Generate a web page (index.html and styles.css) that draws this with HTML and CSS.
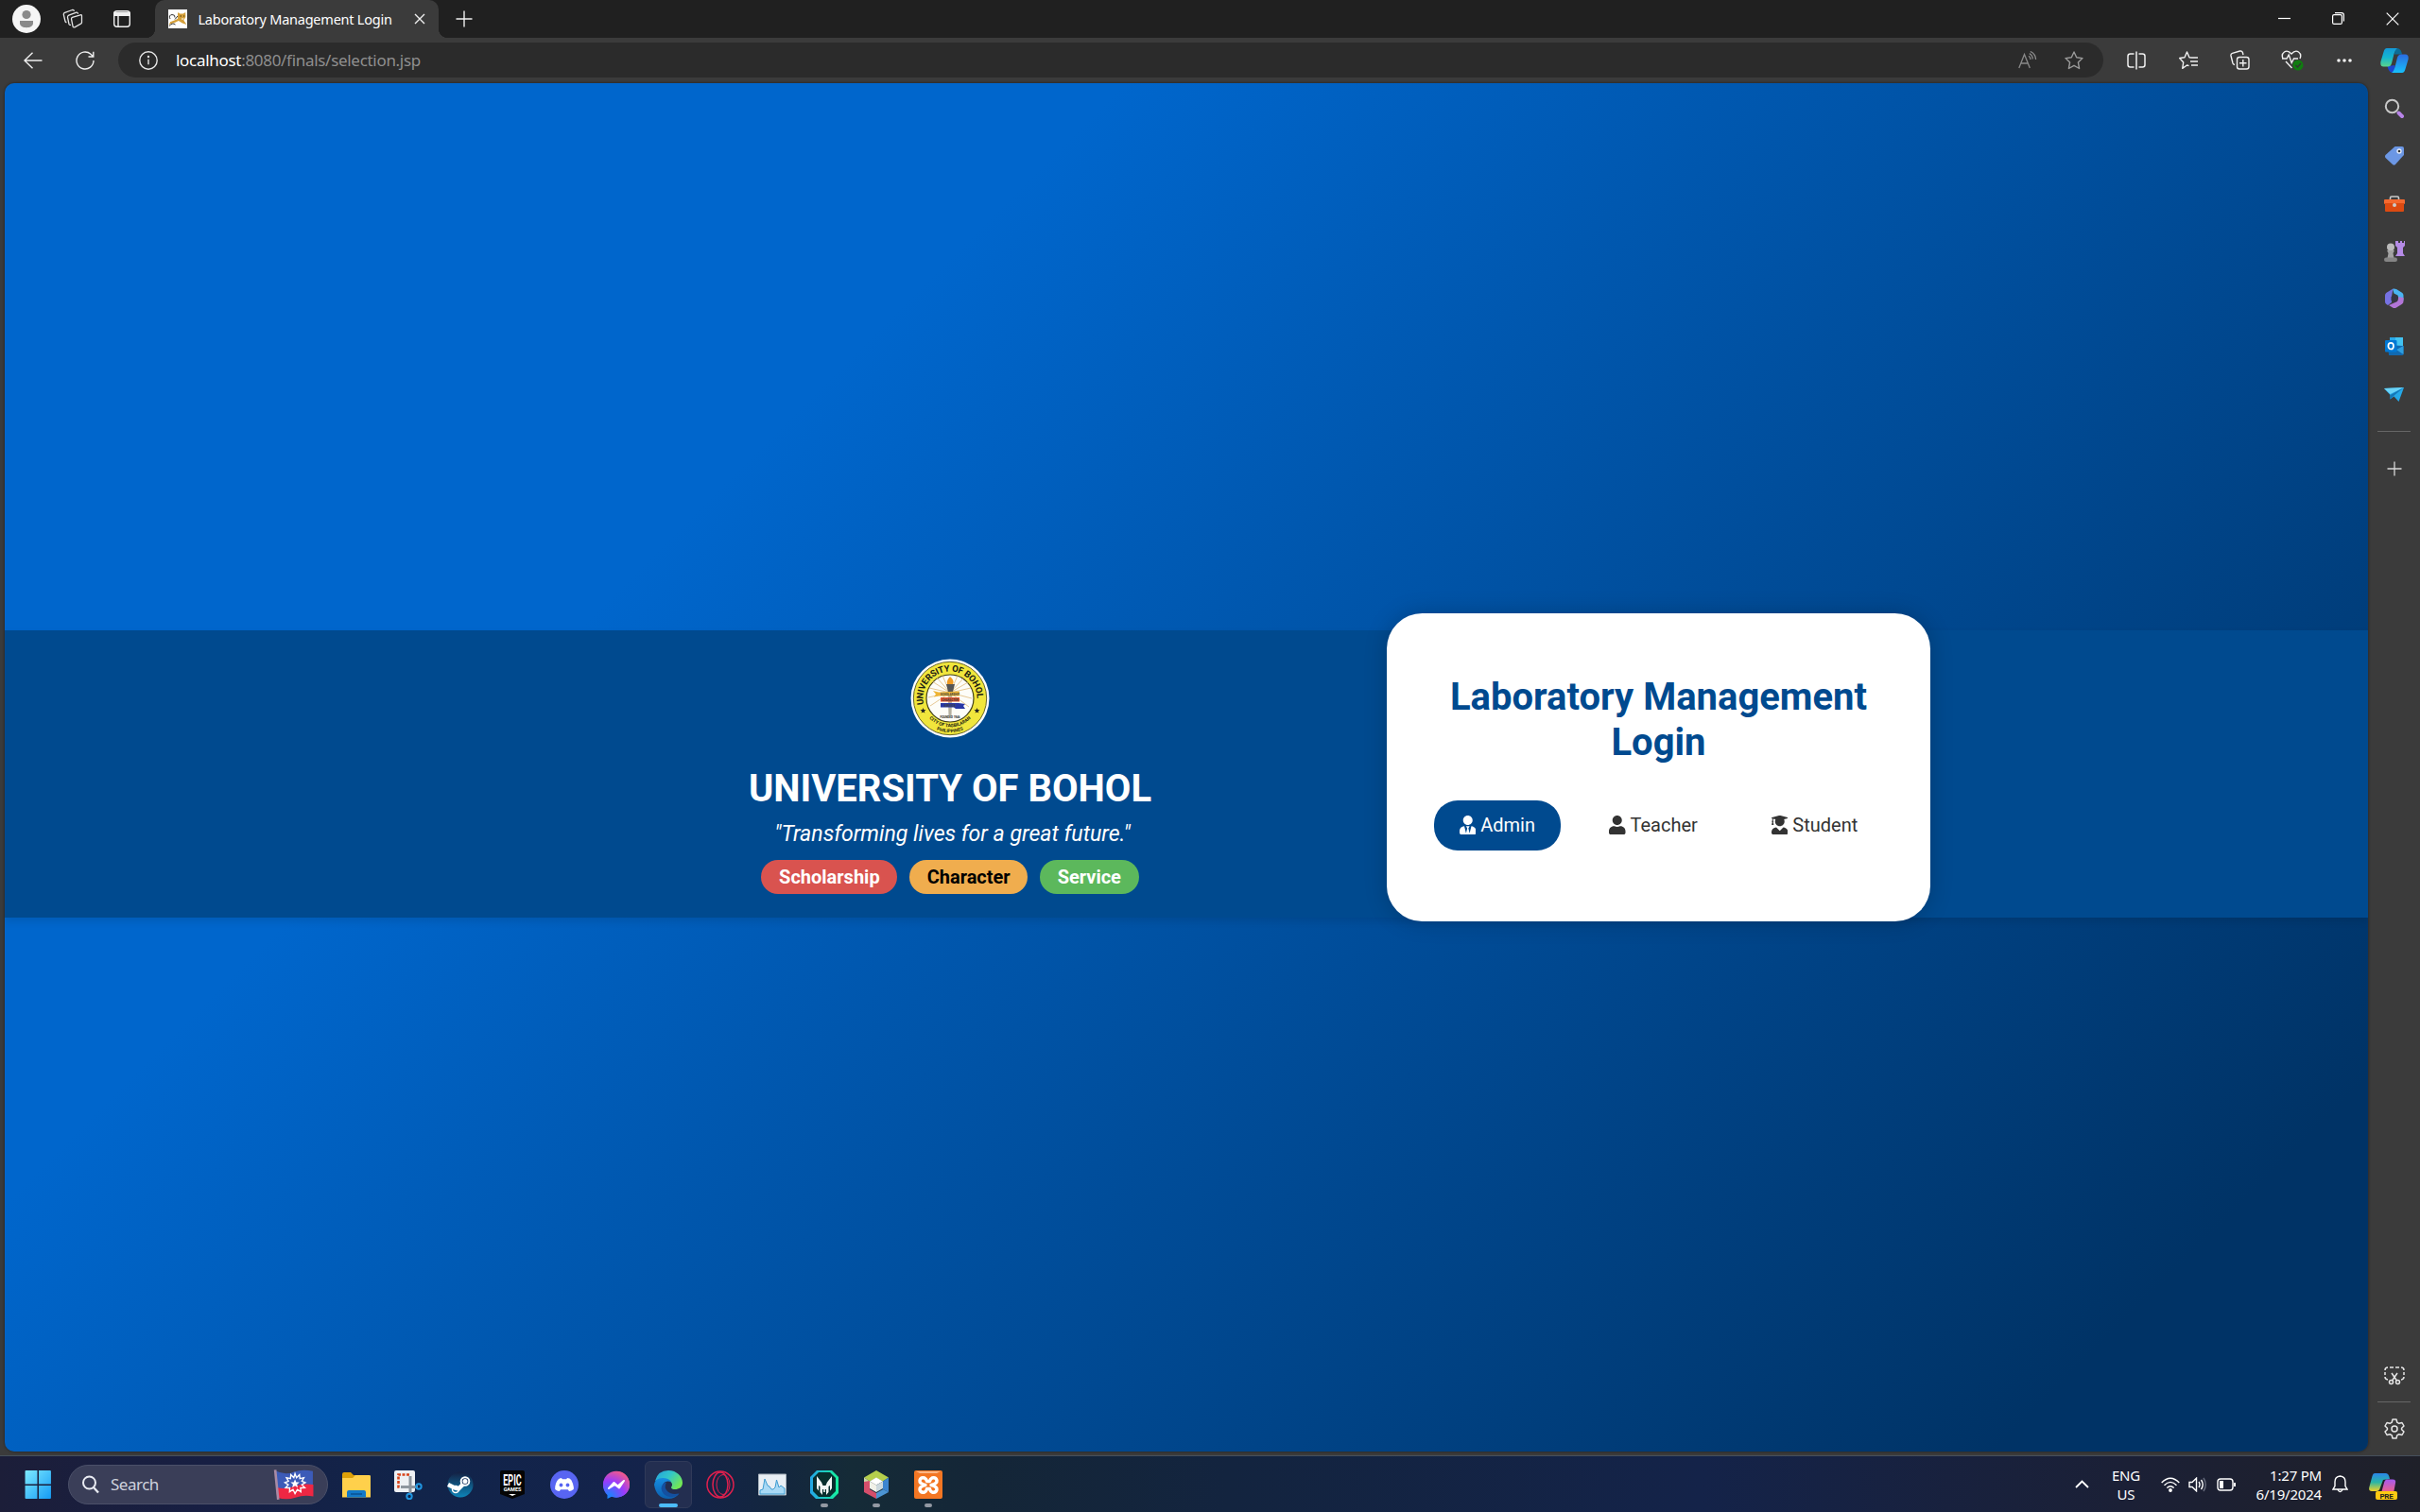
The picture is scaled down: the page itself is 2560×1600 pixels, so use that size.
FILE: index.html
```html
<!DOCTYPE html>
<html lang="en">
<head>
<meta charset="utf-8">
<title>Laboratory Management Login</title>
<link rel="stylesheet" href="styles.css">
</head>
<body>
<header class="titlebar">
  <div class="tb-left">
    <svg class="avatar" width="30" height="30" viewBox="0 0 30 30"><circle cx="15" cy="15" r="15" fill="#f5f5f5"/><circle cx="15" cy="10.500" r="4.600" fill="#8a8a8a"/><path d="M8 17h14v2.500c0 3-3 4.700-7 4.700s-7-1.700-7-4.700z" fill="#8a8a8a"/></svg>
    <svg class="workspaces" width="22" height="22" viewBox="0 0 22 22" fill="none" stroke="#e4e4e4" stroke-width="1.300"><path d="M10.500 9.300l8.500-2.500q1.500-.4 1.500 1v7q0 1-1 1.400l-6.500 3.600q-1.700.5-2-1.200l-1.500-7.500q-.2-1.300 1-1.800zM7 16.500l-1.500-7q-.2-1.700 1.300-2.300l8-3q1.500-.3 1.700 1.500M7 16.500q.5 1.300 2 .8M3 13.500L1.300 6.500q-.2-1.600 1.300-2.200L10.500 1.500q1.500-.4 2 1.200M3 13.500q.3 1.200 1.500 1"/></svg>
    <svg class="tabmenu" width="20" height="20" viewBox="0 0 20 20" fill="none" stroke="#f0f0f0" stroke-width="1.400"><rect x="1.700" y="1.700" width="16.600" height="16.600" rx="3"/><path d="M2 3.500h16v2.700H2z" fill="#f0f0f0"/><path d="M6 6v12"/></svg>
  </div>
  <div class="tab">
    <svg width="20" height="20" viewBox="0 0 20 20"><path fill="#fff" d="M0 0h20v20H0z"/><path d="M10 4.500L10.500 3l1.800 1.500h3.400L18.200 3l.2 5-2 3.500 3 4.500-4.500-1.500-4-2.500-3.500 1.800-5 1.500-1.800 1.500 1.500-3.500 5-2 3-1.500z" fill="#d5a03a"/><path d="M2 10q-2-4 2-4.500 3.500 0 3 3M1 17.500q3.500-4 6.500-1.500M10 7l-3 3.500" stroke="#333" stroke-width="1" fill="none"/><path d="M12.500 7H14M16 7h1.200" stroke="#4a3a10"/><path d="M14 10h2.500" stroke="#fff"/></svg>
    <span class="tab-title">Laboratory Management Login</span>
    <svg width="12" height="12" viewBox="0 0 12 12" stroke="#f0f0f0" stroke-width="1.400"><path d="M1 1l10 10M11 1L1 11"/></svg>
  </div>
  <svg class="newtab" width="18" height="18" viewBox="0 0 18 18" stroke="#f0f0f0" stroke-width="1.400"><path d="M9 .5v17M.5 9h17"/></svg>
  <div class="winctl">
    <span><svg width="13" height="13" viewBox="0 0 13 13"><path d="M0 6.500h13" stroke="#fff" stroke-width="1.200"/></svg></span>
    <span><svg width="13" height="13" viewBox="0 0 13 13" fill="none" stroke="#fff" stroke-width="1.200"><rect x=".6" y="2.600" width="9.800" height="9.800" rx="1.500"/><path d="M3 .6h7q2.400 0 2.400 2.400v6.500"/></svg></span>
    <span><svg width="14" height="14" viewBox="0 0 14 14" stroke="#fff" stroke-width="1.200"><path d="M.7.7l12.600 12.600M13.300.7L.7 13.300"/></svg></span>
  </div>
</header>

<nav class="toolbar">
  <div class="nav-btns">
    <svg width="20" height="18" viewBox="0 0 20 18" fill="none" stroke="#f0f0f0" stroke-width="1.400"><path d="M19.500 9H1M9.500.8L1 9l8.500 8.200"/></svg>
    <svg width="20" height="20" viewBox="0 0 20 20" fill="none" stroke="#f0f0f0" stroke-width="1.400"><path d="M19 10a9 9 0 1 1-3-6.700L18.500 5.800M18.800.8v5.200h-5.300"/></svg>
  </div>
  <div class="address">
    <svg width="20" height="20" viewBox="0 0 20 20" fill="none" stroke="#e6e6e6" stroke-width="1.400"><circle cx="10" cy="10" r="9.200"/><path d="M10 8.800v5.500"/><circle cx="10" cy="6" r=".5"/></svg>
    <span class="url"><b>localhost</b>:8080/finals/selection.jsp</span>
    <div class="addr-end">
      <svg width="20" height="20" viewBox="0 0 20 20" fill="none" stroke="#8a8a8a" stroke-width="1.300"><path d="M.8 18L6.500 3.500 12.300 18M2.800 13h7.500M11 5.200q2 1.200 2 3.800M11.800 2.600q3.500 1.800 3.500 6M12.800.5q5.500 2.500 5.800 8.500"/></svg>
      <svg width="20" height="20" viewBox="0 0 20 20" fill="none" stroke="#9a9a9a" stroke-width="1.400" stroke-linejoin="round"><path d="M10 1l2.700 5.800 6.300.8-4.600 4.400 1.200 6.500L10 15.300l-5.600 3.200 1.200-6.500L1 7.600l6.300-.8z"/></svg>
    </div>
  </div>
  <div class="tools">
    <span><svg width="20" height="20" viewBox="0 0 20 20" fill="none" stroke="#f0f0f0" stroke-width="1.500"><path d="M7.500 3H3.500Q1 3 1 5.500v9Q1 17 3.500 17h4M12.500 3h4Q19 3 19 5.500v9q0 2.500-2.500 2.500h-4M10 .5v19"/></svg></span>
    <span><svg width="20" height="20" viewBox="0 0 20 20" fill="none" stroke="#f0f0f0" stroke-width="1.400" stroke-linejoin="round"><path d="M13 7l-2-.3L8.500 1 6 6.700l-5.300.8 4 4.500-1 6.300L8.500 15l2 .7M13 7h7M12 11h8M13 15h7"/></svg></span>
    <span><svg width="21" height="21" viewBox="0 0 21 21" fill="none" stroke="#f0f0f0" stroke-width="1.400"><rect x="7.500" y="7.500" width="12.500" height="12.500" rx="2.500"/><path d="M13.800 10v7.500M10 13.800h7.500M5 15.500q-1.500-.3-2-1.500L1 6q-.4-2 1.500-2.600L10.500 1q2-.4 2.800 1.300l.7 2.700"/></svg></span>
    <span><svg width="24" height="24" viewBox="0 0 24 24" fill="none" stroke="#f0f0f0" stroke-width="1.400"><path d="M2 10Q0 5.500 3.500 3T11 5q4-4.500 7.500-2T20 10M5 13l6.500 7M1 10h5l2.200-4 3 8.500 2.300-4.500h4.500"/><circle cx="18" cy="17" r="5.500" fill="#107c10" stroke="none"/><path d="M15.500 17l2 2 3.500-4" stroke="#333"/></svg></span>
    <span><svg width="18" height="6" viewBox="0 0 18 6" fill="#f0f0f0"><circle cx="3" cy="3" r="1.800"/><circle cx="9" cy="3" r="1.800"/><circle cx="15" cy="3" r="1.800"/></svg></span>
  </div>
  <svg class="copilot" width="30" height="28" viewBox="0 0 30 28"><defs><linearGradient id="ca" x1="0" y1="0" x2="0" y2="1"><stop offset="0" stop-color="#1499d8"/><stop offset=".5" stop-color="#14b5cf"/><stop offset="1" stop-color="#5ad48a"/></linearGradient><linearGradient id="cb" x1="0" y1="0" x2="0" y2="1"><stop offset="0" stop-color="#2a6be0"/><stop offset="1" stop-color="#17c0fb"/></linearGradient></defs><path d="M16 1c4.500 0 6 1.500 7 6.500h-8z" fill="#0b6c97"/><path d="M13 27q-4 0-5.500-7l8-1v8z" fill="#1c46d0"/><path d="M7 1h11q-2 1-3.500 6L12 17q-1 3.500-4 3.500H3.500Q-.5 20.500.500 15l3-10Q4.500 1 7 1z" fill="url(#ca)"/><path d="M23 27H12q2-1 3.500-6L18 11q1-3.500 4-3.500h4.500q4 0 3 5.500l-3 10q-1 4-3.500 4z" fill="url(#cb)"/></svg>
</nav>

<div class="workspace">
  <main class="page">
    <section class="band">
      <div class="brand">
        <svg class="seal" width="84" height="84" viewBox="0 0 84 84">
          <defs><path id="sealTop" d="M14.500 49.500A28.500 28.500 0 1 1 69.500 49.500"/><path id="sealLow" d="M14 54A30.500 30.500 0 0 0 70 54"/><path id="sealLow2" d="M8 54A36 36 0 0 0 76 54"/></defs>
          <circle cx="42" cy="42" r="41.500" fill="#fff"/><circle cx="42" cy="42" r="38.700" fill="#f1e63c" stroke="#55531d" stroke-width=".9"/><circle cx="42" cy="42" r="25" fill="#fdfdf8" stroke="#44421a" stroke-width="1.200"/>
          <g stroke="#dfba78" stroke-width=".8"><path d="M42 36L20 31M42 36L23 24M42 36L28 20M42 36L34 18M42 36L50 18M42 36L57 20M42 36L61 25M42 36L64 31M42 36L19 41M42 36L65 42M42 36L21 50M42 36L62 51"/></g>
          <path d="M39.500 30h5l-1 30h-3z" fill="#b5b0a0"/><path d="M38 27h9l-2 8h-5z" fill="#555"/><path d="M42 19q5 4 3 8h-6q-1-4 3-8z" fill="#ee9b24"/>
          <path d="M24 34l6 1.500 22-1v5H30l-5 1 2-3z" fill="#edb436"/><path d="M32 41h20v4.500H32z" fill="#e5532d"/><path d="M32 47h19l7 1-2 2 2 3H48l-2-1.500H32z" fill="#2736a5"/>
          <g class="ribbon-text"><text x="42" y="38.500">SCHOLARSHIP</text><text x="42" y="44.500">CHARACTER</text><text x="42" y="50.500">SERVICE</text><text x="42" y="63" fill="#222">FOUNDED 1946</text></g>
          <text class="seal-main"><textPath href="#sealTop" textLength="96" startOffset="1">UNIVERSITY OF BOHOL</textPath></text>
          <text class="seal-sub"><textPath href="#sealLow" startOffset="50%" text-anchor="middle">CITY OF TAGBILARAN</textPath></text>
          <text class="seal-sub"><textPath href="#sealLow2" startOffset="50%" text-anchor="middle">PHILIPPINES</textPath></text>
          <g fill="#222"><path d="M13.500 52l.8 2 2.200.1-1.700 1.400.6 2.100-1.900-1.200-1.900 1.200.6-2.100-1.700-1.400 2.200-.1zM70.500 52l.8 2 2.200.1-1.700 1.400.6 2.100-1.900-1.200-1.900 1.200.6-2.100-1.700-1.400 2.200-.1z"/></g>
        </svg>
        <h1>UNIVERSITY OF BOHOL</h1>
        <p class="motto">"Transforming lives for a great future."</p>
        <div class="badges"><span class="badge red">Scholarship</span><span class="badge amber">Character</span><span class="badge green">Service</span></div>
      </div>
      <div class="card">
        <h2>Laboratory Management<br>Login</h2>
        <div class="roles">
          <a class="role active"><svg viewBox="0 0 448 512"><path d="M224 256c70.700 0 128-57.300 128-128S294.700 0 224 0 96 57.300 96 128s57.300 128 128 128zm95.800 32.600L272 480l-32-136 32-56h-96l32 56-32 136-47.800-191.400C56.900 292 0 350.300 0 422.400V464c0 26.500 21.500 48 48 48h352c26.500 0 48-21.500 48-48v-41.600c0-72.100-56.900-130.400-128.200-133.800z"/></svg>Admin</a>
          <a class="role"><svg viewBox="0 0 448 512"><path d="M224 256c70.700 0 128-57.300 128-128S294.700 0 224 0 96 57.300 96 128s57.300 128 128 128zm89.600 32h-16.700c-22.200 10.200-46.900 16-72.900 16s-50.600-5.800-72.900-16h-16.700C60.200 288 0 348.200 0 422.400V464c0 26.500 21.500 48 48 48h352c26.500 0 48-21.500 48-48v-41.600c0-74.200-60.200-134.400-134.400-134.400z"/></svg>Teacher</a>
          <a class="role"><svg viewBox="0 0 448 512"><path d="M319.400 320.600L224 416l-95.400-95.400C57.100 323.700 0 382.200 0 454.400v9.600c0 26.500 21.500 48 48 48h352c26.500 0 48-21.500 48-48v-9.600c0-72.200-57.100-130.700-128.600-133.800zM13.600 79.800l6.400 1.500v58.400c-7 4.200-12 11.500-12 20.300 0 8.400 4.600 15.400 11.100 19.700L3.500 242c-1.700 6.900 2.100 14 7.600 14h41.800c5.500 0 9.300-7.100 7.600-14l-15.600-62.300C51.400 175.400 56 168.400 56 160c0-8.800-5-16.100-12-20.300V87.100l66 15.900c-8.600 17.200-14 36.400-14 57 0 70.700 57.300 128 128 128s128-57.300 128-128c0-20.600-5.300-39.800-14-57l96.300-23.200c18.200-4.400 18.200-27.100 0-31.500l-190.400-46c-13-3.100-26.700-3.100-39.700 0L13.600 48.200c-18.100 4.400-18.100 27.200 0 31.600z"/></svg>Student</a>
        </div>
      </div>
    </section>
  </main>
  <aside class="sidebar">
    <div class="side-apps">
      <span><svg width="22" height="22" viewBox="0 0 22 22" fill="none"><circle cx="8.500" cy="8.500" r="6.700" stroke="#c8c8c8" stroke-width="2"/><path d="M15.500 15.500l3.500 3.500" stroke="#b884e8" stroke-width="4" stroke-linecap="round"/></svg></span>
      <span><svg width="22" height="22" viewBox="0 0 22 22"><path d="M11.500 1h7.500q2 0 2 2v7L12 20q-1.500 1.300-3 0L1.500 13q-1-1.500 0-3z" fill="#6c97e4"/><circle cx="16" cy="6" r="2" fill="#333" stroke="#e6edfa" stroke-width="1.300"/></svg></span>
      <span><svg width="22" height="22" viewBox="0 0 22 22"><path d="M6.500 7V4.500Q6.500 3 8 3h6q1.500 0 1.500 1.500V7" fill="none" stroke="#c9c9c9" stroke-width="1.600"/><rect y="6" width="22" height="5" rx="1" fill="#f4692f"/><path d="M1 10h20v8q0 1-1 1H2q-1 0-1-1z" fill="#dc4a11"/><circle cx="11" cy="12" r="2" fill="#ccc"/></svg></span>
      <span><svg width="24" height="24" viewBox="0 0 24 24"><path d="M14 1h2v2h2V1h2v2h2V1h1v5l-2 2v6l2 3H13l2-3V8l-2-2V1z" fill="#b58be6"/><circle cx="8" cy="7.500" r="4" fill="#bbb"/><path d="M4 11h8l-1.500 3 1 5H4.500l1-5z" fill="#a2a2a2"/><rect x="1" y="18.500" width="14" height="4.500" rx="2.200" fill="#858585"/></svg></span>
      <span><svg width="22" height="22" viewBox="0 0 22 22"><path d="M9 .8q2-.8 4 .3l6 3.700q1.500 1 1.500 3V13l-5-2-1-3.500-4-2z" fill="#4ab4f2"/><path d="M20.500 10v4q0 1.700-1.500 2.700l-6 3.800q-2 1-4 0L5 18l9-4 1.500-5z" fill="#b275d7"/><path d="M9.500.6L8 8.500V15l-4 3-1.800-1.200Q1 16 1 14V7.500q0-1.700 1.500-2.700z" fill="#7672e2"/><path d="M11 7l3.500 2v4L11 15l-3.500-2V9z" fill="#353545"/></svg></span>
      <span><svg width="22" height="22" viewBox="0 0 22 22"><path d="M6 1h14v9H6z" fill="#28a8ea"/><path d="M12 1h8v9h-8z" fill="#42c3f2"/><path d="M4 9l16.500 1v8.500q0 1.500-1.500 1.500H5z" fill="#1169b0"/><path d="M20.500 10v9L13 14z" fill="#2e9fe0"/><rect x="1" y="4" width="12.500" height="12.500" rx="1" fill="#0078d4"/><ellipse cx="7.200" cy="10.200" rx="2.800" ry="3.300" fill="none" stroke="#fff" stroke-width="1.700"/></svg></span>
      <span><svg width="22" height="22" viewBox="0 0 22 22"><path d="M0 5l21-1-5.500 15-5-5.500-4 3V12z" fill="#25a9e8"/><path d="M0 5l21-1L6.500 11z" fill="#6ad3f7"/><path d="M21 4L6.500 12v4.500L10 13z" fill="#1477b8"/></svg></span>
    </div>
    <hr>
    <svg class="side-add" width="16" height="16" viewBox="0 0 16 16" stroke="#d8d8d8" stroke-width="1.300"><path d="M8 .5v15M.5 8h15"/></svg>
    <div class="side-bottom">
      <svg width="22" height="20" viewBox="0 0 22 20" fill="none" stroke="#e6e6e6" stroke-width="1.500"><path d="M4 14q-3-.3-3-3M1 9V6M1 4q0-3 3-3M6 1h4M12 1h4M18 1q3 0 3 3M21 6v3M21 11q0 2.700-3 3M8 7l5.500 8M14 7l-5.500 8"/><circle cx="7.500" cy="16.500" r="2"/><circle cx="14.500" cy="16.500" r="2"/></svg>
      <hr>
      <svg width="22" height="22" viewBox="0 0 22 22" fill="none" stroke="#e6e6e6" stroke-width="1.500" stroke-linejoin="round"><circle cx="11" cy="11" r="3"/><path d="M9 1h4l.8 3.200 2 1.100L19 4.500l2 3.500-2.400 2.200v1.600L21 14l-2 3.500-3.200-.8-2 1.100L13 21H9l-.8-3.200-2-1.100-3.200.8L1 14l2.400-2.200v-1.600L1 8l2-3.500 3.200.8 2-1.100z"/></svg>
    </div>
  </aside>
</div>

<footer class="taskbar">
  <svg class="start" width="29" height="31" viewBox="0 0 28 30"><defs><linearGradient id="wn" x1="0" y1="0" x2="1" y2="1"><stop offset="0" stop-color="#7eeaff"/><stop offset="1" stop-color="#149bf5"/></linearGradient></defs><path d="M1.500 1H13v14H.5V2q0-1 1-1zM14.500 1H26q1 0 1 1v13H14.500zM.5 16.500H13V30H1.500q-1 0-1-1zM14.500 16.500H27V29q0 1-1 1H14.500z" fill="url(#wn)"/></svg>
  <div class="search">
    <svg width="18" height="20" viewBox="0 0 18 20" fill="none" stroke="#e9ebf2" stroke-width="2"><circle cx="7.500" cy="8" r="6.500"/><path d="M12 13l5 5.500" stroke-width="2.300"/></svg>
    <span>Search</span>
    <svg class="flag" width="43" height="35" viewBox="0 0 41 33"><path d="M2 3q10 5 19 1 9-3 19-.5V17.500q-10-2-19 1.500-9 3.500-18 1z" fill="#3c5bb8"/><path d="M3 19.500q9 3 19-1 9-3 18.500-1.500V29q-9-2-18 1T4 30z" fill="#ee2743"/><path d="M2 2l3 30" stroke="#a98ba5" stroke-width="2.500"/><path d="M22 6l1.500 4 3-3 .4 4 4-1-2 3.500 3.500 1.500-3.500 2.200 3 3-4.300.1.300 4-3.500-2.300L22 26l-2-4-3.500 2.300.2-4-4.200-.1 2.700-3-3.400-2.200 3.600-1.500-2-3.500 4 1 .4-4 3 3z" fill="none" stroke="#fff" stroke-width="1.300"/><path d="M22 11.500l1.200 3 3.300.2-2.500 2 .8 3.300-2.800-1.800-2.800 1.800.8-3.300-2.500-2 3.300-.2z" fill="#fff"/></svg>
  </div>
  <div class="apps">
    <span><svg width="30" height="30" viewBox="0 0 30 30"><path d="M0 4q0-2 2-2h7l3 3h14v8H0z" fill="#dda008"/><path d="M0 8h11l3-3h14.500q1.500 0 1.500 1v22.500H0z" fill="#ffd04b"/><path d="M5 28.500V23q0-2 2-2h16q2 0 2 2v5.500z" fill="#1279c9"/><path d="M9 25h12" stroke="#0a5291" stroke-width="1.500"/></svg></span>
    <span><svg width="30" height="32" viewBox="0 0 30 32"><rect x="0" y="1" width="22" height="23" rx="2" fill="#eef1f4"/><path d="M16 5.500H4.500v13h5" fill="none" stroke="#d8441a" stroke-width="2.600" stroke-dasharray="3 1.500"/><path d="M17 7v18M7 18.500h18" stroke="#8e969e" stroke-width="3"/><circle cx="26" cy="18" r="2.700" fill="none" stroke="#2095e0" stroke-width="2"/><circle cx="16" cy="28.500" r="2.700" fill="none" stroke="#2095e0" stroke-width="2"/></svg></span>
    <span><svg width="28" height="30" viewBox="0 0 28 30"><defs><linearGradient id="st" x1="0" y1="0" x2="0" y2="1"><stop stop-color="#141f41"/><stop offset="1" stop-color="#0d85b9"/></linearGradient></defs><circle cx="14" cy="15" r="13.500" fill="url(#st)"/><path d="M1 15l7 3.500 4 1 7-7" fill="none" stroke="#fff" stroke-width="4.500"/><circle cx="19" cy="11.500" r="4.300" fill="#17315c" stroke="#fff" stroke-width="2"/><circle cx="19" cy="11.500" r="2.500" fill="#fff"/><circle cx="9" cy="20" r="3.500" fill="none" stroke="#fff" stroke-width="1.500"/></svg></span>
    <span><svg class="epic-logo" width="26" height="30" viewBox="0 0 26 30"><path d="M2 0h22q2 0 2 2v23l-13 5-13-5V2q0-2 2-2z" fill="#050505"/><g class="epic"><text transform="translate(13 15.500) scale(.72 1.250)" font-size="12.500">EPIC</text><text transform="translate(13 21.800)" font-size="5.500">GAMES</text></g><path d="M9 25h8l-4 2z" fill="#fff"/></svg></span>
    <span><svg width="30" height="30" viewBox="0 0 30 30"><circle cx="15" cy="15" r="15" fill="#5865f2"/><path d="M10 8.500l2-.5.800 1.300h4.400L18 8l2.500.6q2 1 3.500 5.400 1.200 4 .8 6-2.500 2-4.800 2l-1.200-1.800H11L9.800 22q-2.500 0-4.600-2-.4-2.500.8-6 1.500-4.500 4-5.500z" fill="#fff"/><ellipse cx="11.500" cy="15.500" rx="1.900" ry="2.100" fill="#5865f2"/><ellipse cx="18.500" cy="15.500" rx="1.900" ry="2.100" fill="#5865f2"/></svg></span>
    <span><svg width="30" height="30" viewBox="0 0 30 30"><defs><radialGradient id="ms" cx=".2" cy="1" r="1.150"><stop stop-color="#0a8dff"/><stop offset=".55" stop-color="#9a3bfb"/><stop offset="1" stop-color="#ff5f78"/></radialGradient></defs><path d="M15 1c8 0 14 6 14 14s-6 13.500-14 13.500q-3 0-5-.7L5.500 30v-4Q1 22 1 15 1 7 15 1z" fill="url(#ms)"/><circle cx="15" cy="14.700" r="14" fill="url(#ms)"/><path d="M7 19l5.500-6 4 3.500 6.500-5.500-5 7.500-4.500-3.500z" fill="#fff" stroke="#fff" stroke-width="2" stroke-linejoin="round"/></svg></span>
    <span class="current running"><svg width="30" height="30" viewBox="0 0 30 30"><defs><linearGradient id="eg" x1="0" y1="0" x2="1" y2=".6"><stop stop-color="#249fdf"/><stop offset=".5" stop-color="#31c5ca"/><stop offset="1" stop-color="#72e855"/></linearGradient><linearGradient id="eb" x1="0" y1="0" x2="0" y2="1"><stop stop-color="#168de2"/><stop offset="1" stop-color="#0c5fae"/></linearGradient></defs><path d="M1 11Q4 0 15 0c9 0 15 6.500 15 13 0 5-4 7-8 7s-4.500-2-3.500-3q1.500-2.500-1-5-5-5-16.500-1z" fill="url(#eg)"/><path d="M0 15Q1 8 9 8q6.500.2 9 4-6-2-8.500 2.500c-3 7 4 12.500 9 12.500q4-.2 7.500-2Q22 30 15 30 2 29.500 0 15z" fill="url(#eb)"/><path d="M13 12.500q-3 5.500 1 9.500t12 2.500q1 .2 0 .8-3.500 3-9 3-9-2-9.500-9.300.5-5.500 5.500-6.500z" fill="#1450a0"/></svg></span>
    <span><svg width="30" height="30" viewBox="0 0 30 30" fill="none" stroke="#e0204e" stroke-width="1.500"><circle cx="15" cy="15" r="14"/><ellipse cx="15" cy="15" rx="8" ry="13"/><ellipse cx="18" cy="15" rx="7" ry="10.500" stroke-width="1"/></svg></span>
    <span><svg width="30" height="24" viewBox="0 0 30 24"><path d="M.5 1h29v22H.5z" fill="#e9eff5" stroke="#aab4be"/><path d="M2 18l3-1L7 6l3 7 2 1 2 3h2l2-2 1.500-8 2.500 8 2-2 4 3v6H2z" fill="#a9d9f5" stroke="#3d9bd0"/></svg></span>
    <span class="running"><svg width="30" height="30" viewBox="0 0 30 30"><defs><linearGradient id="pr"><stop stop-color="#24a6e8"/><stop offset="1" stop-color="#15f09d"/></linearGradient></defs><path d="M7 0h16l7 7v17l-6 6H6l-6-6V7z" fill="url(#pr)"/><path d="M9 2h12l6 6v14l-6 6H9l-6-6V8z" fill="#082e2e"/><path d="M7 6l5 6.500 1.500 3.500h3l1.500-3.500L23 6v13l-2 2.500V16l-1.500 1v6L17 26v-6h-1.200v3h-1.600v-3H13v6l-2.500-3v-6L9 16v5.500L7 19z" fill="#f3f6f5"/></svg></span>
    <span class="running"><svg width="28" height="30" viewBox="0 0 28 30"><path d="M14 0l13 7.500-6 4L14 8l-7 3.500-6-4z" fill="#b5cf4c"/><path d="M1 7.500l6 4V20l-6 3z" fill="#cdd7a7"/><path d="M27 7.500l-6 4V20l6 3z" fill="#3d85d0"/><path d="M1 12l6-1v9l7 4v6L1 23z" fill="#d54e6b"/><path d="M14 24l7-4 6 3-13 7z" fill="#4c94d3"/><path d="M14 7.500l7 4-7 4-7-4z" fill="#fff"/><path d="M7 11.500l7 4V23l-7-4z" fill="#f1f1e8"/><path d="M21 11.500l-7 4V23l7-4z" fill="#cbd8dd"/></svg></span>
    <span class="running"><svg width="30" height="30" viewBox="0 0 30 30"><rect width="30" height="30" rx="2" fill="#f37623"/><path d="M2 1h26l-4 2H6z" fill="#fbb584"/><path d="M12 15.500Q5.500 14 6 10.500 7 7 11 8q2 1 2.500 3.500h3Q17 9 19 8q4-1 5 2.500.5 3.500-6 5 6.500 1.500 6 5-1 3.500-5 2.500-2-1-2.500-3.500h-3Q13 22 11 23q-4 1-5-2.500-.5-3.500 6-5z" fill="none" stroke="#fff" stroke-width="3.400" stroke-linejoin="round"/></svg></span>
  </div>
  <div class="tray">
    <svg class="chev" width="15" height="9" viewBox="0 0 15 9" fill="none" stroke="#fff" stroke-width="1.800"><path d="M1 8l6.500-6.500L14 8"/></svg>
    <div class="lang">ENG<br>US</div>
    <svg class="wifi" width="20" height="16" viewBox="0 0 20 16" fill="none" stroke="#fff" stroke-width="1.400"><path d="M.7 6Q10-3.500 19.300 6M3.500 8.800Q10 2 16.500 8.800M6.300 11.500q3.700-3.600 7.400 0"/><circle cx="10" cy="14" r="1.200" fill="#fff"/></svg>
    <svg class="vol" width="20" height="16" viewBox="0 0 20 16" fill="none" stroke="#fff" stroke-width="1.400"><path d="M1 5.500h3L8.500 1.200v13.600L4 10.500H1zM11 5q2 3 0 6M13.500 3q3.500 5 0 10"/><path d="M16 1q4.500 7 0 14" stroke="#666b7c"/></svg>
    <svg class="bat" width="20" height="14" viewBox="0 0 20 14" fill="none" stroke="#fff" stroke-width="1.400"><rect x="1" y="1" width="16" height="12" rx="3"/><path d="M3 3h4v8H3z" fill="#fff" stroke="none"/><path d="M19 5v4" stroke-width="2"/></svg>
    <div class="clock">1:27 PM<br>6/19/2024</div>
    <svg class="bell" width="17" height="19" viewBox="0 0 17 19" fill="none" stroke="#fff" stroke-width="1.400"><path d="M8.500 1Q14 1.500 14 7v4.500l2 3.500H1l2-3.500V7q0-5.500 5.500-6zM6 15.500q2.500 4 5 0"/></svg>
    <svg class="pre" width="30" height="29" viewBox="0 0 30 29"><defs><linearGradient id="pa" x1="0" y1="0" x2="0" y2="1"><stop stop-color="#2a86ea"/><stop offset=".5" stop-color="#29b5a6"/><stop offset="1" stop-color="#f2d125"/></linearGradient><linearGradient id="pb" x1="0" y1="0" x2="0" y2="1"><stop stop-color="#a55af0"/><stop offset="1" stop-color="#f4627e"/></linearGradient></defs><path d="M6 1h12q3 0 4 6l-7 1-3 8q-1 4-4 4H3q-4 0-2.500-5l3-11Q4.200 1 6 1z" fill="url(#pa)"/><path d="M19 7.500h6q4 0 3 4L26 22H13l3-11q1-3.500 3-3.500z" fill="url(#pb)"/><rect x="7" y="20" width="23" height="9" rx="2" fill="#fdc912"/><text class="pretext" x="18.500" y="27.500">PRE</text></svg>
  </div>
</footer>
</body>
</html>
```
FILE: styles.css
```css
* { box-sizing: border-box; }
body { margin: 0; width: 2560px; height: 1600px; display: flex; flex-direction: column; overflow: hidden; background: #3b3b3b; color: #fff; font-family: "Noto Sans", "Open Sans", sans-serif; }
svg { display: block; flex: none; }

/* Browser title bar */
.titlebar { height: 40px; background: #202020; display: flex; align-items: center; }
.tb-left { display: flex; align-items: center; width: 164px; padding-left: 13px; height: 40px; }
.workspaces { margin-left: 23px; }
.tabmenu { margin-left: 31px; }
.tab { width: 300px; height: 40px; background: #3b3b3b; border-radius: 10px 10px 0 0; display: flex; align-items: center; padding: 0 14px; position: relative; }
.tab::before, .tab::after { content: ""; position: absolute; bottom: 0; width: 10px; height: 10px; }
.tab::before { left: -10px; background: radial-gradient(circle at 0 0, transparent 10px, #3b3b3b 10.500px); }
.tab::after { right: -10px; background: radial-gradient(circle at 100% 0, transparent 10px, #3b3b3b 10.500px); }
.tab-title { font-size: 14.500px; line-height: 20px; width: 228px; margin-left: 11.500px; white-space: nowrap; letter-spacing: -.24px; }
.newtab { margin-left: 18px; }
.winctl { margin-left: auto; display: flex; }
.winctl span { width: 57.500px; display: flex; justify-content: center; }

/* Browser toolbar */
.toolbar { height: 48px; display: flex; align-items: flex-start; padding-top: 5px; }
.nav-btns { width: 125px; height: 37px; display: flex; align-items: center; padding-left: 25px; gap: 35px; }
.address { width: 2100px; height: 37px; border-radius: 19px; background: #2b2b2b; display: flex; align-items: center; padding: 0 21px 0 22px; }
.url { margin-left: 19px; font-size: 17px; letter-spacing: -.3px; line-height: 37px; color: #8f8f8f; white-space: nowrap; }
.url b { font-weight: 400; color: #fff; }
.addr-end { margin-left: auto; display: flex; gap: 29px; }
.tools { display: flex; height: 37px; margin-left: 7px; }
.tools span { width: 55.200px; display: flex; align-items: center; justify-content: center; }
.copilot { margin-left: 10px; margin-top: 5px; }

/* Web page */
.workspace { height: 1453px; display: flex; border-bottom: 1px solid #46505c; }
.page { width: 2500px; height: 1448px; margin-left: 5px; border-radius: 10px; overflow: hidden; background: linear-gradient(135deg, #06c 30%, #036 90%); padding-top: 579px; font-family: Roboto, sans-serif; box-shadow: 0 0 3px rgba(0,0,0,.5); }
.band { height: 304px; background: #004a8f; box-shadow: 0 4px 8px rgba(0,0,0,.1); display: flex; align-items: flex-start; padding-left: 782.500px; }
.brand { width: 435px; display: flex; flex-direction: column; align-items: center; padding-top: 30px; }
.seal-main { font: 700 9.500px Roboto, sans-serif; fill: #1d1d12; }
.seal-sub { font: 700 4.900px Roboto, sans-serif; fill: #1d1d12; }
.ribbon-text { font: 700 3px Roboto, sans-serif; text-anchor: middle; fill: #444; }
h1 { margin: 30px 0 0; font-size: 40px; line-height: 48px; font-weight: 700; white-space: nowrap; }
.motto { margin: 10px 0 0 5px; font-size: 23.100px; line-height: 28px; font-style: italic; white-space: nowrap; }
.badges { display: flex; gap: 12.500px; margin-top: 13px; }
.badge { height: 36px; line-height: 37px; padding: 0 18.750px; border-radius: 18px; font-size: 20px; font-weight: 700; }
.red { background: #d9534f; }
.amber { background: #f0ad4e; color: #000; }
.green { background: #5cb85c; }
.card { width: 575px; height: 326px; margin: -18px 0 0 244.500px; padding: 65px 50px 0; border-radius: 37.500px; background: #fff; box-shadow: 0 0 25px rgba(0,0,0,.2); }
h2 { margin: 0; font-size: 40px; line-height: 48px; font-weight: 700; text-align: center; color: #004a8f; white-space: nowrap; }
.roles { display: flex; justify-content: space-between; margin-top: 37px; }
.role { height: 53px; padding: 0 26.750px 1px; border-radius: 25px; display: flex; align-items: center; gap: 5px; font-size: 20px; color: #333; }
.role svg { width: 17.500px; height: 20px; fill: currentColor; }
.role.active { background: #004a8f; color: #fff; }

/* Edge sidebar */
.sidebar { width: 55px; display: flex; flex-direction: column; align-items: center; }
.side-apps { display: flex; flex-direction: column; padding-top: 2px; }
.side-apps span { height: 50.300px; display: flex; align-items: center; justify-content: center; }
.sidebar hr { width: 35px; height: 1px; border: 0; margin: 14px 0 0; background: #666; }
.side-add { margin-top: 31px; }
.side-bottom { margin-top: auto; padding-bottom: 17px; display: flex; flex-direction: column; align-items: center; }
.side-bottom hr { margin: 17px 0; }

/* Windows taskbar */
.taskbar { height: 59px; display: flex; align-items: center; background: linear-gradient(90deg, #1c1e39 0, #171f43 220px, #11244a 430px, #14234b 700px, #13263f 820px, #152b37 900px, #142637 1030px, #13243f 1300px, #142349 1800px, #1b2036 2250px, #1f2029 2560px); }
.start { margin-left: 26px; }
.search { margin-left: 17px; width: 275px; height: 42px; border-radius: 21px; border: 1px solid #4b5069; background: #3a3e58; display: flex; align-items: center; padding: 0 14px; font-size: 17px; color: #ced1dc; letter-spacing: -.5px; }
.search span { margin-left: 12px; }
.flag { margin-left: auto; }
.apps { display: flex; margin-left: 5px; }
.apps span { width: 50px; height: 50px; margin-right: 5px; border-radius: 6px; display: flex; align-items: center; justify-content: center; position: relative; }
.apps .current { background: #232e50; border: 1px solid #303a59; }
.apps .running::after { content: ""; position: absolute; bottom: 1px; width: 8px; height: 4px; border-radius: 2px; background: #9399a3; }
.apps .current::after { width: 20px; background: #4cbcfc; bottom: 0; }
.epic-logo { overflow: visible; }
.epic { font-family: Roboto, sans-serif; font-weight: 700; fill: #fff; text-anchor: middle; }
.tray { margin-left: auto; display: flex; align-items: center; height: 59px; font-size: 15px; line-height: 20px; letter-spacing: -.2px; }
.lang { width: 40px; margin-left: 19px; text-align: center; }
.wifi { margin-left: 17px; }
.vol { margin-left: 9px; }
.bat { margin-left: 10px; }
.clock { width: 91px; text-align: right; white-space: nowrap; }
.bell { margin-left: 11px; }
.pre { margin: 3px 24px 0 22px; }
.pretext { font: 700 8px Roboto, sans-serif; fill: #222; text-anchor: middle; }
```
